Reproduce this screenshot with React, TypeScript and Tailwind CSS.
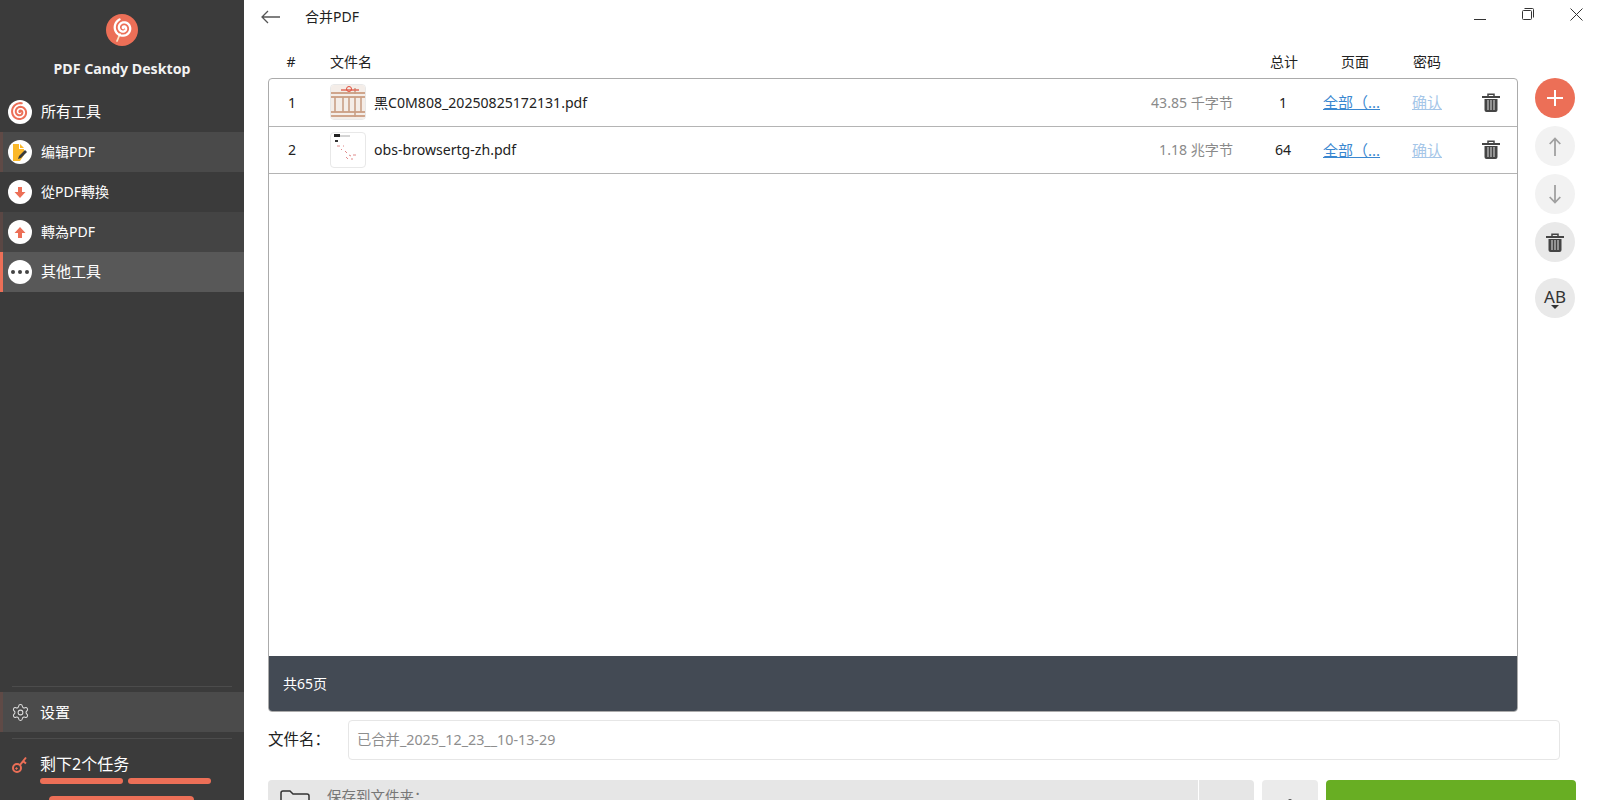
import { Settings } from 'lucide-react';
import { ReactNode } from 'react';

const font = 'font-["Noto_Sans","Noto_Sans_CJK_SC",sans-serif]';

const navItems = [
  { label: '所有工具', bg: 'bg-[#3b3b3b]', bar: 'bg-transparent', icon: 'all', text: 'text-[15px]' },
  { label: '编辑PDF', bg: 'bg-[#4a4a4a]', bar: 'bg-[#5f4a46]', icon: 'edit', text: 'text-[14px]' },
  { label: '從PDF轉換', bg: 'bg-[#3b3b3b]', bar: 'bg-transparent', icon: 'down', text: 'text-[14px]' },
  { label: '轉為PDF', bg: 'bg-[#444444]', bar: 'bg-[#5a4744]', icon: 'up', text: 'text-[14px]' },
  { label: '其他工具', bg: 'bg-[#585858]', bar: 'bg-[#ec6f57]', icon: 'more', text: 'text-[15px]' },
];

// spiral from the centre outwards, used by the logo and the first nav item
function spiralPath(cx: number, cy: number, maxR: number, turns: number) {
  const steps = 80;
  let d = '';
  for (let i = 0; i <= steps; i++) {
    const t = i / steps;
    const a = t * turns * Math.PI * 2 + 2.4;
    const r = maxR * t;
    d += `${i === 0 ? 'M' : 'L'}${(cx + Math.cos(a) * r).toFixed(2)} ${(cy + Math.sin(a) * r).toFixed(2)}`;
  }
  return d;
}

function Logo() {
  return (
    <svg width="32" height="32" viewBox="0 0 32 32">
      <circle cx="16" cy="16" r="16" fill="#ec6f57" />
      <path d="M11 27l3-7" stroke="#fbe3c4" strokeWidth="1.800" strokeLinecap="round" />
      <path d={spiralPath(17.500, 14, 9.500, 2.300)} fill="none" stroke="#ffffff" strokeWidth="2.300" strokeLinecap="round" />
    </svg>
  );
}

function NavIcon({ kind }: { kind: string }) {
  let inner: ReactNode = null;
  if (kind === 'all')
    inner = (
      <svg width="20" height="20" viewBox="0 0 20 20">
        <path d={spiralPath(10, 10, 9, 2.400)} fill="none" stroke="#ec6f57" strokeWidth="2" strokeLinecap="round" />
      </svg>
    );
  if (kind === 'edit')
    inner = (
      <svg width="16" height="17" viewBox="0 0 16 17">
        <path d="M1 0h6v5h5v6l-4 6H1z" fill="#fbb829" />
        <path d="M8 0l4 4H8z" fill="#fbb829" />
        <path d="M6 15l1-3 6-6 2 2-6 6z" fill="#3b3b3b" />
      </svg>
    );
  if (kind === 'down')
    inner = (
      <svg width="12" height="13" viewBox="0 0 12 13">
        <path d="M4 1h4v5h3.500L6 12 .5 6H4z" fill="#ec6f57" />
      </svg>
    );
  if (kind === 'up')
    inner = (
      <svg width="12" height="13" viewBox="0 0 12 13">
        <path d="M4 12h4V7h3.500L6 1 .5 7H4z" fill="#ec6f57" />
      </svg>
    );
  if (kind === 'more')
    inner = (
      <div className="flex gap-[3px]">
        <span className="w-1 h-1 rounded-full bg-[#444444]" />
        <span className="w-1 h-1 rounded-full bg-[#444444]" />
        <span className="w-1 h-1 rounded-full bg-[#444444]" />
      </div>
    );
  return <div className="w-6 h-6 rounded-full bg-white flex items-center justify-center shrink-0">{inner}</div>;
}

function Sidebar() {
  return (
    <div className="w-[244px] h-[800px] shrink-0 bg-[#3b3b3b] flex flex-col overflow-hidden">
      <div className="h-[92px] flex flex-col items-center pt-[14px]">
        <Logo />
        <div className="mt-[13px] text-[14.200px] leading-5 font-bold text-[#f2f2f2]">PDF Candy Desktop</div>
      </div>
      {navItems.map((item) => (
        <div key={item.label} className={`h-10 flex items-center ${item.bg}`}>
          <div className={`w-[3px] h-full ${item.bar}`} />
          <div className="ml-[5px]">
            <NavIcon kind={item.icon} />
          </div>
          <span className={`ml-[9px] mb-px text-white ${item.text}`}>{item.label}</span>
        </div>
      ))}
      <div className="flex-1" />
      <div className="mx-3 h-px bg-[#4c4c4c] mb-[5px]" />
      <div className="h-10 flex items-center bg-[#4b4b4b]">
        <div className="w-[3px] h-full bg-[#5f4a46]" />
        <Settings size={19} strokeWidth={1.3} className="ml-[8px] text-[#dddddd]" />
        <span className="ml-[10px] text-[15px] text-white">设置</span>
      </div>
      <div className="mx-3 h-px bg-[#4c4c4c] mt-[6px]" />
      <div className="h-[57px] pl-3 pt-[15px]">
        <div className="flex items-center h-5">
          <svg width="16" height="17" viewBox="0 0 16 17" fill="none" stroke="#ec6f57" strokeWidth="2">
            <circle cx="5" cy="12" r="4" />
            <path d="M8 9l6-7.500M11 5l3 2.500" />
            <circle cx="4.500" cy="12.500" r=".8" fill="#ec6f57" strokeWidth="1" />
          </svg>
          <span className="ml-3 text-[16px] text-white">剩下2个任务</span>
        </div>
        <div className="ml-7 mt-1 flex gap-[5px]">
          <div className="w-[83px] h-[6px] rounded-full bg-[#ec6f57]" />
          <div className="w-[83px] h-[6px] rounded-full bg-[#ec6f57]" />
        </div>
      </div>
      <div className="h-[4px] mx-[49px] w-[145px] rounded-t-md bg-[#ec6f57]" />
    </div>
  );
}

const files = [
  { n: 1, name: '黑C0M808_20250825172131.pdf', size: '43.85 千字节', total: 1, thumb: 'a' },
  { n: 2, name: 'obs-browsertg-zh.pdf', size: '1.18 兆字节', total: 64, thumb: 'b' },
];

function Thumb({ kind }: { kind: string }) {
  return (
    <div className="w-9 h-9 rounded border border-[#e8e8e8] overflow-hidden bg-white shrink-0">
      {kind === 'a' ? (
        <svg width="36" height="36" viewBox="0 0 36 36">
          <rect width="36" height="36" fill="#f4ede8" />
          <path d="M0 8h36M0 12h36M0 27h36M0 31h36" stroke="#cfa58c" strokeWidth="2" />
          <path d="M4 12v15M12 12v15M18 12v15M24 12v15M30 12v15M24 3v6M24 27v5" stroke="#c99f86" strokeWidth="1.600" />
          <path d="M10 5h18" stroke="#e06a5a" strokeWidth="1.500" />
          <circle cx="18" cy="4" r="2.500" fill="none" stroke="#e0503f" strokeWidth="1" />
        </svg>
      ) : (
        <svg width="36" height="36" viewBox="0 0 36 36">
          <rect x="3" y="1" width="6" height="3" fill="#222222" />
          <path d="M9 3h10" stroke="#aaaaaa" />
          <rect x="4" y="7" width="3" height="2" fill="#333333" />
          <path d="M6 13l3 0M12 13l1 0M14 18l2 2M18 22l2 1M22 22l3 0M15 24l2 2M20 26l2 0M10 16l1 1" stroke="#e08a8a" strokeWidth="1" />
          <rect x="29" y="34" width="3" height="1" fill="#777777" />
        </svg>
      )}
    </div>
  );
}

function TrashIcon() {
  return (
    <svg width="18" height="19" viewBox="0 0 18 19">
      <path d="M6 3.500V1.200h6v2.300" fill="none" stroke="#444444" strokeWidth="1.500" />
      <rect x="0" y="3" width="18" height="2" fill="#444444" />
      <path d="M2.500 6h13v11a2 2 0 01-2 2h-9a2 2 0 01-2-2z" fill="#444444" />
      <path d="M6 7v10M9 7v10M12 7v10" stroke="#b5b5b5" strokeWidth="1.400" />
    </svg>
  );
}

function SideButton({ bg, children }: { bg: string; children: ReactNode }) {
  return <div className={`w-10 h-10 rounded-full flex items-center justify-center ${bg}`}>{children}</div>;
}

function Main() {
  return (
    <div className="flex-1 h-[800px] overflow-hidden bg-white flex flex-col relative">
      <div className="h-[33px] flex items-center shrink-0">
        <svg className="ml-[17px]" width="19" height="14" viewBox="0 0 19 14" fill="none" stroke="#555555" strokeWidth="1.300">
          <path d="M19 7H1M7 1L1 7l6 6" />
        </svg>
        <span className="ml-[25px] text-[14px] text-[#222222]">合并PDF</span>
        <div className="ml-auto mr-4 flex items-start gap-9 h-[33px] pt-2">
          <svg width="12" height="12" viewBox="0 0 12 12" stroke="#333333" strokeWidth="1">
            <path d="M0 11.500h12" />
          </svg>
          <svg width="12" height="12" viewBox="0 0 12 12" fill="none" stroke="#333333" strokeWidth="1">
            <rect x=".5" y="2.500" width="9" height="9" rx="1" />
            <path d="M2.500 .5h8a1 1 0 011 1v8" />
          </svg>
          <svg width="13" height="13" viewBox="0 0 13 13" stroke="#333333" strokeWidth="1">
            <path d="M.5 .5l12 12M12.500 .5l-12 12" />
          </svg>
        </div>
      </div>

      <div className="flex px-6 gap-[17px] flex-1 min-h-0">
        <div className="w-[1252px] flex flex-col">
          <div className="h-[45px] flex items-end pb-[6px] text-[14px] text-[#222222] shrink-0">
            <span className="w-[46px] text-center">#</span>
            <span className="ml-4">文件名</span>
            <span className="ml-auto w-[56px] text-center mr-[14px]">总计</span>
            <span className="w-[58px] text-center mr-[14px]">页面</span>
            <span className="w-[58px] text-center mr-[62px]">密码</span>
          </div>
          <div className="h-[634px] shrink-0 rounded-[4px] border border-[#ababab] flex flex-col overflow-hidden">
            {files.map((f) => (
              <div key={f.n} className="h-[47.500px] shrink-0 border-b border-[#b4b4b4] flex items-center text-[14.100px] text-[#222222]">
                <span className="w-[44px] text-center ml-[1px]">{f.n}</span>
                <div className="ml-4">
                  <Thumb kind={f.thumb} />
                </div>
                <span className="ml-2">{f.name}</span>
                <span className="ml-auto text-[#8a8a8a] w-[120px] text-right">{f.size}</span>
                <span className="w-[52px] ml-[24px] text-center">{f.total}</span>
                <span className="ml-[14px] w-[56px] text-[15px] text-[#3a87d0] underline whitespace-nowrap">全部（...</span>
                <span className="ml-[33px] w-[30px] text-[15px] text-[#a5c6e8] underline">确认</span>
                <div className="ml-[40px] mr-[17px] flex">
                  <TrashIcon />
                </div>
              </div>
            ))}
            <div className="flex-1" />
            <div className="h-[55px] shrink-0 bg-[#434a54] flex items-center px-[14px] text-[14px] text-white">共65页</div>
          </div>
        </div>
        <div className="flex flex-col pt-[45px] gap-2 items-center">
          <SideButton bg="bg-[#ec6f57]">
            <svg width="16" height="16" viewBox="0 0 16 16" stroke="#ffffff" strokeWidth="2">
              <path d="M8 0v16M0 8h16" />
            </svg>
          </SideButton>
          <SideButton bg="bg-[#f2f2f2]">
            <svg width="12" height="19" viewBox="0 0 12 19" fill="none" stroke="#a0a0a0" strokeWidth="1.800">
              <path d="M6 19V1.500M.7 7L6 1.500 11.300 7" />
            </svg>
          </SideButton>
          <SideButton bg="bg-[#f2f2f2]">
            <svg width="12" height="19" viewBox="0 0 12 19" fill="none" stroke="#a0a0a0" strokeWidth="1.800">
              <path d="M6 0v17.500M.7 12L6 17.500 11.300 12" />
            </svg>
          </SideButton>
          <SideButton bg="bg-[#e9e9e9]">
            <TrashIcon />
          </SideButton>
          <div className="mt-2">
            <SideButton bg="bg-[#e9e9e9]">
              <div className="flex flex-col items-center leading-none text-[17px] text-[#333333]">
                <span className="h-[17px]">AB</span>
                <span className="w-0 h-0 border-x-[4px] border-x-transparent border-t-[4px] border-t-[#333333]" />
              </div>
            </SideButton>
          </div>
        </div>
      </div>

      <div className="absolute left-6 right-[39px] top-[720px] flex items-center">
        <span className="w-[80px] text-[15.500px] text-[#222222]">文件名：</span>
        <div className="flex-1 h-10 rounded-[4px] border border-[#e6e6e6] flex items-center px-2 text-[14.300px] text-[#8e8e8e]">已合并_2025_12_23__10-13-29</div>
      </div>
      <div className="absolute left-6 top-[780px] flex gap-2">
        <div className="w-[986px] h-12 rounded-[4px] bg-[#e6e6e6] flex">
          <svg className="ml-3 mt-[9px]" width="30" height="22" viewBox="0 0 30 22" fill="none" stroke="#333333" strokeWidth="1.500">
            <path d="M1 21V4a2 2 0 012-2h7l3 3h14a2 2 0 012 2v14" />
          </svg>
          <span className="ml-[17px] mt-[6px] text-[14.500px] leading-5 text-[#777777]">保存到文件夹：</span>
          <div className="ml-auto w-[56px] border-l border-white" />
        </div>
        <div className="w-[56px] h-12 rounded-[4px] bg-[#ebebeb] flex justify-center pt-[19px]">
          <span className="w-1 h-1 rounded-full bg-[#555555]" />
        </div>
        <div className="w-[250px] h-12 rounded-[4px] bg-[#68ae23]" />
      </div>
    </div>
  );
}

export default function App() {
  return (
    <div className={`w-[1599px] h-[800px] flex overflow-hidden ${font}`}>
      <Sidebar />
      <Main />
    </div>
  );
}
